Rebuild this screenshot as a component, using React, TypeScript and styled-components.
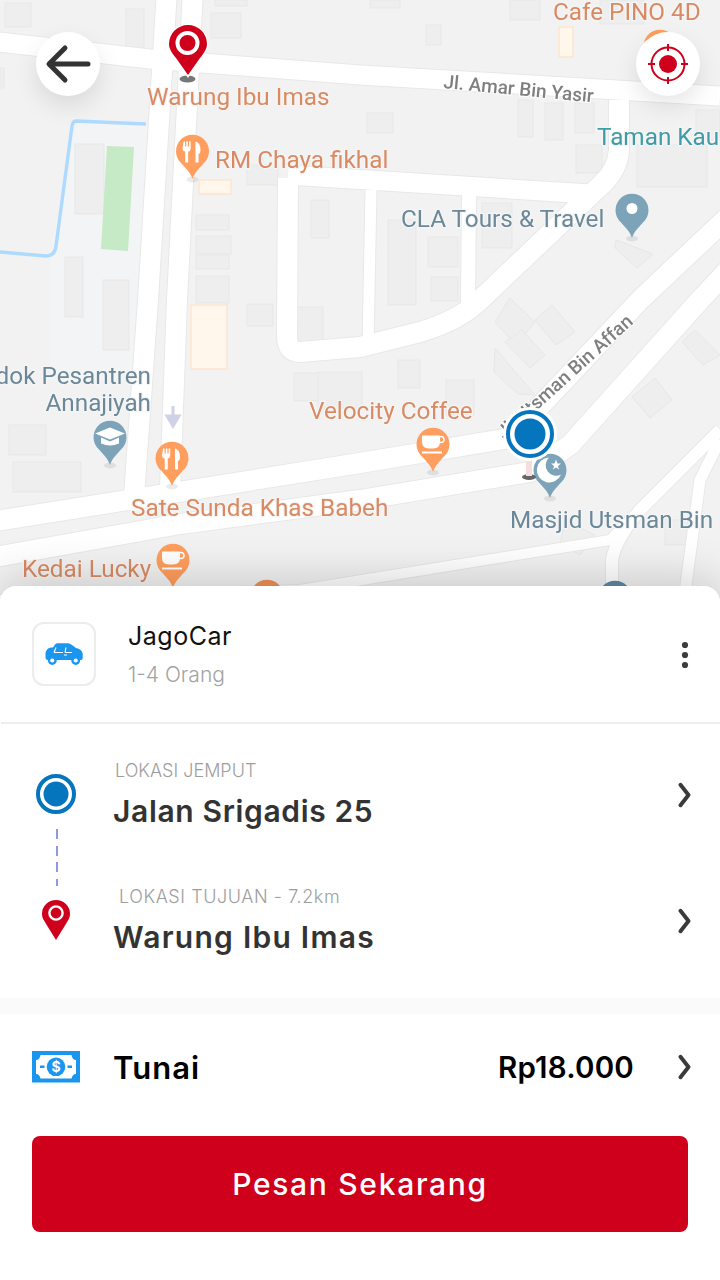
import React from "react";
import styled, { createGlobalStyle } from "styled-components";

const Global = createGlobalStyle`
  html, body { margin: 0; padding: 0; background: #fff; }
  * { box-sizing: border-box; }
`;

const Screen = styled.div`
  position: relative;
  width: 720px;
  height: 1280px;
  overflow: hidden;
  background: #fff;
  font-family: Inter, "Noto Sans", sans-serif;
`;
const MapArea = styled.div`
  position: relative;
  width: 720px;
  height: 600px;
  background: #f2f2f2;
`;
const MapSvg = styled.svg`
  display: block;
  filter: blur(0.65px);
`;
const Overlay = styled.svg`
  position: absolute;
  left: 0;
  top: 0;
`;
const RoundButton = styled.button<{ $side: "left" | "right" }>`
  position: absolute;
  top: 32px;
  ${(p) => (p.$side === "left" ? "left: 36px;" : "right: 20px;")}
  width: 64px;
  height: 64px;
  padding: 0;
  border: 0;
  border-radius: 50%;
  background: #fff;
  box-shadow: 0 10px 24px rgba(0, 0, 0, 0.1);
  display: flex;
  align-items: center;
  justify-content: center;
`;
const Sheet = styled.section`
  position: relative;
  margin-top: -14px;
  height: 694px;
  background: #fff;
  border-radius: 16px 16px 0 0;
  box-shadow: 0 -8px 44px rgba(0, 0, 0, 0.17);
  display: flex;
  flex-direction: column;
`;
const VehicleRow = styled.div`
  height: 138px;
  margin-left: 1px;
  border-bottom: 2px solid #eeeeee;
  display: flex;
  align-items: center;
  padding: 0 31px 0 31px;
`;
const VehicleIcon = styled.div`
  width: 64px;
  height: 64px;
  border: 2px solid #ececec;
  border-radius: 12px;
  display: flex;
  align-items: center;
  justify-content: center;
`;
const VehicleText = styled.div`
  margin-left: 32px;
  padding-top: 2px;
  flex: 1;
  display: flex;
  flex-direction: column;
  gap: 7px;
`;
const VehicleName = styled.div`
  font-size: 25px;
  line-height: 32px;
  letter-spacing: 0.5px;
  color: #111;
`;
const VehicleMeta = styled.div`
  font-size: 21px;
  line-height: 32px;
  font-weight: 300;
  color: #a3a3a3;
`;
const KebabSvg = styled.svg`
  margin-top: 2px;
`;
const Route = styled.div`
  height: 274px;
  padding-top: 41px;
  display: flex;
  flex-direction: column;
`;
const Stop = styled.div`
  display: flex;
  align-items: center;
  height: 64px;
  padding-right: 29px;
`;
const Rail = styled.div`
  width: 113px;
  display: flex;
  justify-content: center;
  padding-right: 1px;
  padding-bottom: 6px;
`;
const StopText = styled.div`
  flex: 1;
`;
const StopLabel = styled.div<{ $indent?: number; $spacing?: number }>`
  margin-left: ${(p) => p.$indent ?? 2}px;
  font-size: 18px;
  line-height: 28px;
  font-weight: 300;
  letter-spacing: ${(p) => p.$spacing ?? 0}px;
  color: #9e9e9e;
`;
const StopName = styled.div<{ $spacing: number }>`
  font-size: 30px;
  line-height: 52px;
  font-weight: 600;
  letter-spacing: ${(p) => p.$spacing}px;
  color: #333;
`;
const Connector = styled.div`
  width: 2px;
  height: 57px;
  margin: 0 0 5px 56px;
  background: repeating-linear-gradient(to bottom, #8b9cdc 0 10px, transparent 10px 16.6px);
`;
const Band = styled.div`
  height: 16px;
  background: #fafafa;
`;
const PayRow = styled.div`
  height: 106px;
  display: flex;
  align-items: center;
  padding: 0 29px 0 32px;
`;
const PayLabel = styled.div`
  margin-left: 33px;
  flex: 1;
  font-size: 31px;
  font-weight: 600;
  letter-spacing: 1px;
  color: #000;
`;
const Price = styled.div`
  margin-right: 44px;
  font-size: 29.5px;
  font-weight: 600;
  letter-spacing: 0.2px;
  color: #000;
`;
const OrderButton = styled.button`
  margin: 16px 32px 0;
  height: 96px;
  border: 0;
  border-radius: 8px;
  background: #cf001b;
  color: #fff;
  font-family: inherit;
  font-size: 30px;
  font-weight: 500;
  letter-spacing: 1.7px;
`;
const ChevronSvg = styled.svg<{ $lift?: number }>`
  flex: none;
  margin-bottom: ${(p) => p.$lift ?? 0}px;
`;

const Chevron = ({ lift }: { lift?: number }) => (
  <ChevronSvg $lift={lift} width="13" height="26" viewBox="0 0 13 26">
    <polyline points="2.500,2.800 10.500,13 2.500,23.200" fill="none" stroke="#3a3a3a" strokeWidth="3.900" strokeLinecap="round" strokeLinejoin="round" />
  </ChevronSvg>
);

const Kebab = () => (
  <KebabSvg width="8" height="28" viewBox="0 0 8 28">
    <circle cx="4" cy="4" r="3.100" fill="#3c3c3c" />
    <circle cx="4" cy="14" r="3.100" fill="#3c3c3c" />
    <circle cx="4" cy="24" r="3.100" fill="#3c3c3c" />
  </KebabSvg>
);

const CarIcon = () => (
  <svg width="38" height="22" viewBox="0 0 38 22">
    <path
      d="M0.500 15 L0.500 10 Q1.500 5 6 4.500 L8 4.500 L10 1.500 Q11 0.300 13 0.300 L23 0.300 Q25 0.300 27 2 L31 5 Q37 6 37.700 11 L37.700 15 Q37.700 17 36 17 L3 17 Q0.500 17 0.500 15 Z"
      fill="#1a96ef"
    />
    <circle cx="7.300" cy="17.500" r="4.400" fill="#1a96ef" />
    <circle cx="30.700" cy="17.500" r="4.400" fill="#1a96ef" />
    <circle cx="7.300" cy="17.500" r="2.100" fill="#fff" />
    <circle cx="30.700" cy="17.500" r="2.100" fill="#fff" />
    <path d="M9 9.500 L11 4.500 M9 9.500 L18 9.500 M20 9.500 L21 4.500 M20 9.500 L27 9.500 M19 12 L22 12" stroke="#fff" strokeWidth="1.100" fill="none" />
  </svg>
);

const CashIcon = () => (
  <svg width="48" height="32" viewBox="0 0 48 32">
    <rect x="0" y="0" width="48" height="31.500" fill="#1a96ef" />
    <path d="M4 9 C6.500 9 8 7 8.500 4 L39.500 4 C40 7 41.500 9 44 9 L44 23 C41.500 23 40 25 39.500 27.500 L8.500 27.500 C8 25 6.500 23 4 23 Z" fill="#fff" />
    <circle cx="24" cy="15.800" r="9.300" fill="#1a96ef" />
    <rect x="8" y="14.500" width="4.500" height="2.500" fill="#1a96ef" />
    <rect x="35.500" y="14.500" width="4.500" height="2.500" fill="#1a96ef" />
    <text x="24" y="21" textAnchor="middle" fontFamily="Inter, sans-serif" fontWeight="700" fontSize="14" fill="#fff">$</text>
  </svg>
);

const PinSmall = () => (
  <svg width="30" height="42" viewBox="0 0 30 42">
    <path d="M15 41 L4.500 24 C2 20 1 18 1 15 A14 14 0 0 1 29 15 C29 18 28 20 25.500 24 Z" fill="#cf001b" />
    <circle cx="15" cy="14" r="6.600" fill="none" stroke="#fff" strokeWidth="2.400" />
  </svg>
);

const BlueDot = () => (
  <svg width="40" height="40" viewBox="0 0 40 40">
    <circle cx="20" cy="20" r="18" fill="#fff" stroke="#0575bd" strokeWidth="4" />
    <circle cx="20" cy="20" r="12.500" fill="#0575bd" />
  </svg>
);

/* --- map data --- */
type Box = [number, number, number, number];
const buildings: Box[] = [
  [5, 3, 26, 24], [126, 9, 18, 39], [0, 68, 4, 20], [75, 144, 29, 70], [65, 257, 18, 60],
  [103, 280, 26, 70], [196, 215, 33, 15], [196, 236, 35, 18], [196, 255, 33, 14], [196, 276, 33, 27],
  [211, 13, 30, 25], [215, 0, 32, 6], [247, 165, 31, 20], [311, 200, 18, 38], [426, 25, 15, 20],
  [367, 113, 26, 20], [518, 100, 15, 37], [545, 103, 18, 37], [575, 103, 19, 30], [576, 145, 26, 28],
  [637, 145, 70, 42], [696, 110, 24, 30], [428, 237, 30, 30], [431, 277, 27, 24], [388, 220, 28, 85],
  [482, 203, 30, 45], [9, 425, 37, 30], [13, 462, 68, 30], [247, 304, 26, 22], [293, 307, 30, 35],
  [294, 373, 26, 28], [318, 372, 44, 36], [398, 360, 22, 28], [446, 380, 28, 35], [370, 0, 30, 8],
  [600, 0, 44, 24], [510, 0, 30, 20],
];
const blocks: string[] = [
  "M655 378 L672 400 L650 418 L632 397 Z",
  "M510 298 L535 322 L516 345 L495 322 Z",
  "M552 305 L575 332 L556 345 L535 320 Z",
  "M522 330 L545 355 L530 368 L505 342 Z",
  "M495 348 L535 395 L518 394 L494 372 Z",
  "M695 330 L720 355 L703 365 L682 342 Z",
  "M616 240 L653 254 L637 268 L615 248 Z",
  "M565 520 L595 535 L580 555 L560 545 Z",
  "M665 520 L690 520 L690 545 L665 545 Z",
];

type Road = { d: string; w: number };
const roads: Road[] = [
  { d: "M-10 41 L150 59 L360 75 L720 96", w: 19 },
  { d: "M167 -10 L148 300 L133 510", w: 20 },
  { d: "M193 -10 L177 300 L170 490", w: 20 },
  { d: "M-10 522 L360 463 L510 438 L640 300 L730 215", w: 20 },
  { d: "M-10 558 L180 524 L360 500 L530 472 L570 445 L700 300 L730 268", w: 20 },
  { d: "M619 100 L619 150 Q618 170 600 186 L480 300 Q460 320 420 332 L360 347 L300 352 Q287 352 287 336 L288 178", w: 20 },
  { d: "M288 175 L590 194", w: 19 },
  { d: "M371 190 L368 345", w: 11 },
  { d: "M469 195 L468 304", w: 14 },
  { d: "M-10 600 L300 590 L610 540 L720 430", w: 10 },
  { d: "M612 600 L612 560 Q615 540 640 510 L720 430", w: 12 },
  { d: "M684 600 L700 480 L720 440", w: 11 },
];

const ORANGE = "#ff9e5e";
const SLATE = "#7da3b8";
const PIN = "M0 28.500 C-2 22 -6 19 -11 13 A16.500 16.500 0 1 1 11 13 C6 19 2 22 0 28.500 Z";

const Fork = () => (
  <g fill="#fff">
    <path d="M-9 -9 h1.600 v5 h1.200 v-5 h1.600 v5 h1.200 v-5 h1.600 v7 q0 2.500 -2.500 3 v11 h-3 v-11 q-2.700 -.5 -2.700 -3 Z" />
    <path d="M3 12 V-9 q5 1 5 9 q0 3 -2 3.500 V12 Z" />
  </g>
);
const Cup = () => (
  <g>
    <path d="M-11 -8 H7 V-2 Q7 5 0 5 H-4 Q-11 5 -11 -2 Z" fill="#fff" />
    <circle cx="8" cy="-4" r="3" fill="none" stroke="#fff" strokeWidth="1.600" />
    <rect x="-11" y="8" width="20" height="2" fill="#fff" />
  </g>
);
const Cap = () => (
  <g fill="#fff">
    <path d="M0 -9 L15 -3 L0 3 L-15 -3 Z" />
    <path d="M-9 1 L0 5 L9 1 V7 Q0 11 -9 7 Z" />
  </g>
);
const Crescent = () => (
  <g fill="#fff">
    <path d="M-1 -12 A12.500 12.500 0 1 0 11 5 A10.500 10.500 0 0 1 -1 -12 Z" />
    <path d="M6 -10 L7.500 -6 L11 -6 L8 -3.500 L9 0 L6 -2 L3 0 L4 -3.500 L1 -6 L4.500 -6 Z" />
  </g>
);

const Poi = ({ x, top, color, children }: { x: number; top: number; color: string; children?: React.ReactNode }) => (
  <g transform={`translate(${x} ${top + 16.5})`}>
    <ellipse cx="0" cy="29" rx="6" ry="3" fill="#000" opacity="0.08" />
    <path d={PIN} fill={color} />
    {children}
  </g>
);

const labelFont = "Roboto, sans-serif";
const WARM = "#d98a63";
const COOL = "#6b8899";
const Label = ({ x, y, fill, anchor, children }: { x: number; y: number; fill: string; anchor?: "end"; children: React.ReactNode }) => (
  <text x={x} y={y} fill={fill} fontFamily={labelFont} fontSize="24.300" textAnchor={anchor ?? "start"} stroke="#f5f5f5" strokeWidth="2.500" paintOrder="stroke" strokeLinejoin="round">
    {children}
  </text>
);

const MapDrawing = () => (
  <MapSvg width="720" height="600" viewBox="0 0 720 600">
    <rect width="720" height="600" fill="#f2f2f2" />
    <polygon points="76,122 150,125 146,380 50,380 50,256" fill="#f3f4f5" />
    {buildings.map(([x, y, w, h], i) => (
      <rect key={i} x={x} y={y} width={w} height={h} fill="#eeeeee" stroke="#e7e7e7" strokeWidth="1" />
    ))}
    {blocks.map((d, i) => (
      <path key={i} d={d} fill="#eeeeee" stroke="#e7e7e7" strokeWidth="1" />
    ))}
    {roads.map((r, i) => (
      <path key={i} d={r.d} fill="none" stroke="#e8e8e8" strokeWidth={r.w + 2} strokeLinejoin="round" />
    ))}
    {roads.map((r, i) => (
      <path key={i} d={r.d} fill="none" stroke="#ffffff" strokeWidth={r.w} strokeLinejoin="round" />
    ))}
    <path d="M146 124 L76 121 Q73 121 72 126 L56 246 Q55 256 46 256 L0 252" fill="none" stroke="#aedaff" strokeWidth="3.400" />
    <polygon points="107,146 134,147 128,251 101,249" fill="#c6e9c6" />
    <rect x="191" y="305" width="36" height="64" fill="#fff6ec" stroke="#fde6cf" strokeWidth="1.500" />
    <rect x="199" y="180" width="32" height="14" fill="#fff6ec" stroke="#fde6cf" strokeWidth="1.500" />
    <rect x="559" y="27" width="14" height="30" fill="#fff6ec" stroke="#fde6cf" strokeWidth="1.500" />
    <path d="M173 406 V420 M167 416 L173 426 L179 416 Z" stroke="#cfd2e6" strokeWidth="3" fill="#cfd2e6" />

    <Poi x={192.500} top={134} color={ORANGE}><Fork /></Poi>
    <Poi x={172} top={441} color={ORANGE}><Fork /></Poi>
    <Poi x={433} top={427} color={ORANGE}><Cup /></Poi>
    <Poi x={173} top={543} color={ORANGE}><Cup /></Poi>
    <Poi x={267} top={579} color="#f09058" />
    <Poi x={660} top={29} color={ORANGE} />
    <Poi x={632} top={193} color={SLATE}><circle r="5.500" cy="-1" fill="#fff" /></Poi>
    <Poi x={110} top={420} color={SLATE}><Cap /></Poi>
    <Poi x={550} top={453} color={SLATE}><Crescent /></Poi>
    <Poi x={615} top={580} color="#5d8aa3" />

    <Label x={147} y={105} fill={WARM}>Warung Ibu Imas</Label>
    <Label x={215} y={168} fill={WARM}>RM Chaya fikhal</Label>
    <Label x={553} y={20} fill={WARM}>Cafe PINO 4D</Label>
    <Label x={597} y={145} fill="#3f9ca6">Taman Kau</Label>
    <Label x={401} y={227} fill={COOL}>CLA Tours &amp; Travel</Label>
    <Label x={151} y={384} fill={COOL} anchor="end">dok Pesantren</Label>
    <Label x={151} y={411} fill={COOL} anchor="end">Annajiyah</Label>
    <Label x={309} y={419} fill={WARM}>Velocity Coffee</Label>
    <Label x={131} y={516} fill={WARM}>Sate Sunda Khas Babeh</Label>
    <Label x={22} y={577} fill={WARM}>Kedai Lucky</Label>
    <Label x={510} y={528} fill={COOL}>Masjid Utsman Bin</Label>
    <text transform="rotate(5.500 443 88)" x="443" y="88" fontFamily={labelFont} fontWeight="500" fontSize="19" fill="#7f7f7f" stroke="#fff" strokeWidth="2" paintOrder="stroke">Jl. Amar Bin Yasir</text>
    <text transform="rotate(-42 634 323)" x="634" y="323" textAnchor="end" fontFamily={labelFont} fontWeight="500" fontSize="19" fill="#7f7f7f" stroke="#fff" strokeWidth="2" paintOrder="stroke">Jl. Utsman Bin Affan</text>
  </MapSvg>
);

const MapPins = () => (
  <Overlay width="720" height="600" viewBox="0 0 720 600">
    <ellipse cx="187.500" cy="79" rx="8" ry="3.500" fill="#777" />
    <path d="M188 78 L176 60 C171 54 168 50 168 44 A20 20 0 0 1 208 44 C208 50 205 54 200 60 Z" fill="#fff" />
    <path d="M188 75 L176 58 C172 53 169 49 169 44 A19 19 0 0 1 207 44 C207 49 204 53 200 58 Z" fill="#cf001b" />
    <circle cx="187.500" cy="43" r="10" fill="none" stroke="#fff" strokeWidth="4" />

    <ellipse cx="529" cy="477" rx="7" ry="3" fill="#666" />
    <rect x="526" y="456" width="6" height="20" fill="#f6dede" />
    <circle cx="530" cy="434" r="27" fill="#fff" />
    <circle cx="530" cy="434" r="22" fill="#fff" stroke="#0575bd" strokeWidth="4" />
    <circle cx="530" cy="434" r="15.500" fill="#0575bd" />
  </Overlay>
);

export default function App() {
  return (
    <Screen>
      <Global />
      <MapArea>
        <MapDrawing />
        <MapPins />
        <RoundButton $side="left" aria-label="Kembali">
          <svg width="48" height="42" viewBox="0 0 48 42">
            <path d="M44 21 H6 M21 5 L5 21 L21 37" fill="none" stroke="#333" strokeWidth="5" strokeLinecap="round" strokeLinejoin="round" />
          </svg>
        </RoundButton>
        <RoundButton $side="right" aria-label="Lokasi saya">
          <svg width="42" height="42" viewBox="0 0 42 42">
            <circle cx="21" cy="21" r="16.500" fill="none" stroke="#cf001b" strokeWidth="2" />
            <circle cx="21" cy="21" r="9" fill="#cf001b" />
            <path d="M21 1 V8 M21 34 V41 M1 21 H8 M34 21 H41" stroke="#cf001b" strokeWidth="2" />
          </svg>
        </RoundButton>
      </MapArea>
      <Sheet>
        <VehicleRow>
          <VehicleIcon><CarIcon /></VehicleIcon>
          <VehicleText>
            <VehicleName>JagoCar</VehicleName>
            <VehicleMeta>1-4 Orang</VehicleMeta>
          </VehicleText>
          <Kebab />
        </VehicleRow>
        <Route>
          <Stop>
            <Rail><BlueDot /></Rail>
            <StopText>
              <StopLabel>LOKASI JEMPUT</StopLabel>
              <StopName $spacing={0.65}>Jalan Srigadis 25</StopName>
            </StopText>
            <Chevron lift={4} />
          </Stop>
          <Connector />
          <Stop>
            <Rail><PinSmall /></Rail>
            <StopText>
              <StopLabel $indent={6} $spacing={0.57}>LOKASI TUJUAN - 7.2km</StopLabel>
              <StopName $spacing={1.25}>Warung Ibu Imas</StopName>
            </StopText>
            <Chevron lift={4} />
          </Stop>
        </Route>
        <Band />
        <PayRow>
          <CashIcon />
          <PayLabel>Tunai</PayLabel>
          <Price>Rp18.000</Price>
          <Chevron />
        </PayRow>
        <OrderButton>Pesan Sekarang</OrderButton>
      </Sheet>
    </Screen>
  );
}
